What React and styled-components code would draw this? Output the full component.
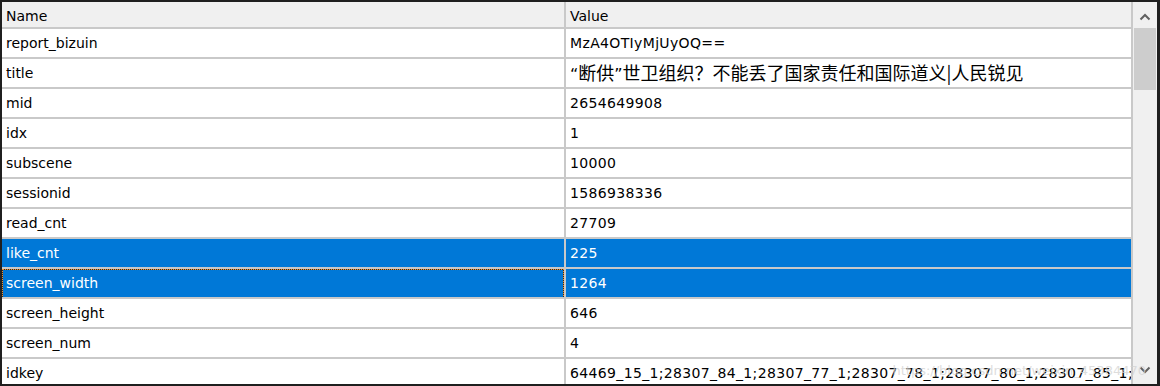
import React from 'react';
import styled, { createGlobalStyle } from 'styled-components';

const Global = createGlobalStyle`
  html, body {
    margin: 0;
    padding: 0;
    background: #ffffff;
  }
`;

const Frame = styled.div`
  position: relative;
  width: 1160px;
  height: 386px;
  box-sizing: border-box;
  border-top: 2px solid #1f1f1f;
  border-left: 2px solid #1f1f1f;
  border-right: 3px solid #1f1f1f;
  border-bottom: 2px solid #1f1f1f;
  display: flex;
  overflow: hidden;
  font-family: 'DejaVu Sans', 'Noto Sans CJK SC', sans-serif;
  font-size: 14px;
  color: #000;
  background: #fff;
`;

const Table = styled.div`
  flex: 1;
  display: flex;
  flex-direction: column;
  overflow: hidden;
`;

const Row = styled.div`
  display: grid;
  grid-template-columns: 562px 565px;
  column-gap: 2px;
  flex: none;
  height: ${(p) => (p.$header ? 25 : 28)}px;
  border-bottom: 2px solid #c9c9c9;
  background: #c9c9c9;
`;

const Cell = styled.div`
  position: relative;
  display: flex;
  align-items: center;
  padding-left: 4px;
  padding-top: ${(p) => (p.$header ? 2 : 0)}px;
  white-space: nowrap;
  overflow: hidden;
  background: ${(p) => (p.$header ? '#f0f0f0' : p.$selected ? '#0078d7' : '#ffffff')};
  color: ${(p) => (p.$selected ? '#ffffff' : '#000000')};
  letter-spacing: ${(p) => (p.$value ? '0.35px' : '0')};

  ${(p) =>
    p.$focus &&
    `
    &::before, &::after {
      content: '';
      position: absolute;
      inset: 0 0 -1px 0;
      pointer-events: none;
    }
    &::before { border: 1px solid #2b2b2b; }
    &::after { border: 1px dotted #f0902a; }
  `}
`;

const Cjk = styled.span`
  font-family: 'Noto Sans CJK SC', sans-serif;
  font-size: 18px;
  line-height: 1;
  letter-spacing: 0;
`;

const Quote = styled.span`
  font-family: 'DejaVu Sans', sans-serif;
  font-size: 16px;
`;

const Scrollbar = styled.div`
  width: 24px;
  flex: none;
  border-left: 2px solid #c9c9c9;
  background: #f0f0f0;
  display: flex;
  flex-direction: column;
  align-items: center;
`;

const ArrowBtn = styled.div`
  height: 26px;
  width: 100%;
  display: flex;
  align-items: center;
  justify-content: center;
  flex: none;
  padding-top: ${(p) => (p.$up ? 3 : 0)}px;
  padding-bottom: ${(p) => (p.$up ? 0 : 2)}px;
  box-sizing: border-box;
`;

const Thumb = styled.div`
  width: 22px;
  height: 62px;
  background: #cdcdcd;
  flex: none;
`;

const Track = styled.div`
  flex: 1;
`;

const Watermark = styled.div`
  position: absolute;
  right: 11px;
  bottom: 6px;
  z-index: 2;
  font-family: 'DejaVu Sans', sans-serif;
  font-size: 13px;
  color: rgba(210, 210, 210, 0.75);
  pointer-events: none;
`;

const Chevron = ({ up }) => (
  <svg width="12" height="8" viewBox="0 0 12 8">
    <path
      d={up ? 'M1.5 6.5 L6 2 L10.5 6.5' : 'M1.5 1.5 L6 6 L10.5 1.5'}
      fill="none"
      stroke="#606060"
      strokeWidth="2"
    />
  </svg>
);

const rows = [
  ['report_bizuin', 'MzA4OTIyMjUyOQ=='],
  [
    'title',
    <Cjk key="t">
      <Quote>“</Quote>断供<Quote>”</Quote>世卫组织？不能丢了国家责任和国际道义|人民锐见
    </Cjk>,
  ],
  ['mid', '2654649908'],
  ['idx', '1'],
  ['subscene', '10000'],
  ['sessionid', '1586938336'],
  ['read_cnt', '27709'],
  ['like_cnt', '225', true],
  ['screen_width', '1264', true, true],
  ['screen_height', '646'],
  ['screen_num', '4'],
  ['idkey', '64469_15_1;28307_84_1;28307_77_1;28307_78_1;28307_80_1;28307_85_1;28307_86_1'],
];

export default function App() {
  return (
    <>
      <Global />
      <Frame>
        <Table>
          <Row $header>
            <Cell $header>Name</Cell>
            <Cell $header>Value</Cell>
          </Row>
          {rows.map(([name, value, selected, focus]) => (
            <Row key={name}>
              <Cell $selected={selected} $focus={focus}>{name}</Cell>
              <Cell $selected={selected} $value>{value}</Cell>
            </Row>
          ))}
        </Table>
        <Scrollbar>
          <ArrowBtn $up>
            <Chevron up />
          </ArrowBtn>
          <Thumb />
          <Track />
          <ArrowBtn>
            <Chevron />
          </ArrowBtn>
        </Scrollbar>
        <Watermark>https://blog.csdn.net/weixin_45384470</Watermark>
      </Frame>
    </>
  );
}
